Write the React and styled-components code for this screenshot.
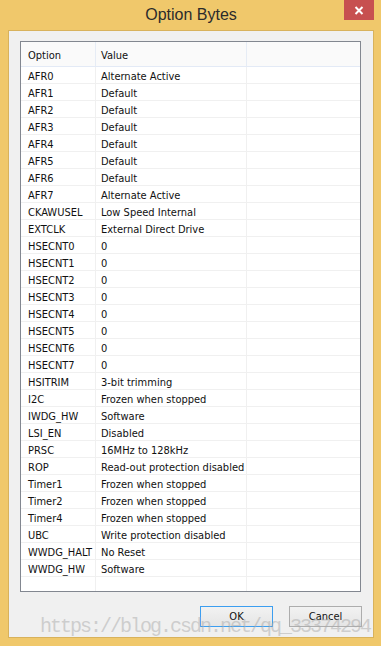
import React from "react";
import styled, { createGlobalStyle } from "styled-components";

const Global = createGlobalStyle`
  html, body {
    margin: 0;
    padding: 0;
    background: #ffffff;
  }
`;

const Window = styled.div`
  width: 381px;
  height: 646px;
  box-sizing: border-box;
  background: #f0c86b;
  padding: 0 7px 8px 8px;
  display: flex;
  flex-direction: column;
  font-family: "DejaVu Sans Condensed", "Liberation Sans", Arial, sans-serif;
`;

const TitleBar = styled.div`
  height: 30px;
  display: grid;
  grid-template-columns: 1fr auto 1fr;
  align-items: start;
`;

const Title = styled.div`
  grid-column: 2;
  font-family: "Liberation Sans", Arial, sans-serif;
  font-size: 16px;
  line-height: 30px;
  color: #2b2b2b;
`;

const CloseButton = styled.div`
  grid-column: 3;
  justify-self: end;
  width: 30px;
  height: 20px;
  background: #c75050;
  display: flex;
  align-items: center;
  justify-content: center;
`;

const Client = styled.div`
  flex: 1;
  position: relative;
  background: #f0f0f0;
  border: 1px solid #d8b25c;
  padding: 10px 12px 0 11px;
  display: flex;
  flex-direction: column;
`;

const ListBox = styled.div`
  height: 551px;
  box-sizing: border-box;
  border: 1px solid #828790;
  background: #ffffff;
  overflow: hidden;
`;

const Row = styled.div`
  display: grid;
  grid-template-columns: 75px 151px 1fr;
  height: ${(p) => (p.$header ? 25 : 17)}px;
  box-sizing: border-box;
  border-bottom: 1px solid ${(p) => (p.$header ? "#e3eaf6" : "#f0f0f0")};
  background: ${(p) => (p.$header ? "#fafafa" : "#ffffff")};
`;

const Cell = styled.div`
  font-size: 11px;
  color: #111;
  display: flex;
  align-items: center;
  box-sizing: border-box;
  padding-left: ${(p) => p.$pad}px;
  padding-top: 2px;
  border-right: 1px solid ${(p) => (p.$header ? "#e6ecf5" : "#f0f0f0")};
  white-space: nowrap;
  overflow: hidden;
  &:last-child {
    border-right: none;
  }
`;

const ButtonRow = styled.div`
  display: flex;
  justify-content: flex-end;
  gap: 16px;
  padding: 14px 0 0 0;
  margin-right: -1px;
`;

const Button = styled.button`
  width: 73px;
  height: 21px;
  box-sizing: border-box;
  padding: 0;
  border: 1px solid ${(p) => (p.$default ? "#3c9ef0" : "#adadad")};
  background: linear-gradient(#f2f2f2, #e5e5e5);
  font-family: "DejaVu Sans Condensed", "Liberation Sans", Arial, sans-serif;
  font-size: 11px;
  color: #111;
`;

const Watermark = styled.div`
  position: absolute;
  left: 31px;
  bottom: -1px;
  font-family: "Liberation Mono", "DejaVu Sans Mono", monospace;
  font-size: 20px;
  letter-spacing: -2px;
  color: rgba(170, 170, 170, 0.5);
  pointer-events: none;
  white-space: nowrap;
`;

const rows = [
  ["AFR0", "Alternate Active"],
  ["AFR1", "Default"],
  ["AFR2", "Default"],
  ["AFR3", "Default"],
  ["AFR4", "Default"],
  ["AFR5", "Default"],
  ["AFR6", "Default"],
  ["AFR7", "Alternate Active"],
  ["CKAWUSEL", "Low Speed Internal"],
  ["EXTCLK", "External Direct Drive"],
  ["HSECNT0", "0"],
  ["HSECNT1", "0"],
  ["HSECNT2", "0"],
  ["HSECNT3", "0"],
  ["HSECNT4", "0"],
  ["HSECNT5", "0"],
  ["HSECNT6", "0"],
  ["HSECNT7", "0"],
  ["HSITRIM", "3-bit trimming"],
  ["I2C", "Frozen when stopped"],
  ["IWDG_HW", "Software"],
  ["LSI_EN", "Disabled"],
  ["PRSC", "16MHz to 128kHz"],
  ["ROP", "Read-out protection disabled"],
  ["Timer1", "Frozen when stopped"],
  ["Timer2", "Frozen when stopped"],
  ["Timer4", "Frozen when stopped"],
  ["UBC", "Write protection disabled"],
  ["WWDG_HALT", "No Reset"],
  ["WWDG_HW", "Software"],
  ["", ""],
];

export default function App() {
  return (
    <>
      <Global />
      <Window>
        <TitleBar>
          <Title>Option Bytes</Title>
          <CloseButton>
            <svg width="10" height="9" viewBox="0 0 10 9">
              <path d="M1.5 1 L8.5 8 M8.5 1 L1.5 8" stroke="#fff" strokeWidth="2" />
            </svg>
          </CloseButton>
        </TitleBar>
        <Client>
          <ListBox>
            <Row $header>
              <Cell $header $pad={7}>Option</Cell>
              <Cell $header $pad={5}>Value</Cell>
              <Cell $header />
            </Row>
            {rows.map(([name, value], i) => (
              <Row key={i}>
                <Cell $pad={7}>{name}</Cell>
                <Cell $pad={5}>{value}</Cell>
                <Cell />
              </Row>
            ))}
          </ListBox>
          <ButtonRow>
            <Button $default>OK</Button>
            <Button>Cancel</Button>
          </ButtonRow>
          <Watermark>https://blog.csdn.net/qq_33374294</Watermark>
        </Client>
      </Window>
    </>
  );
}
